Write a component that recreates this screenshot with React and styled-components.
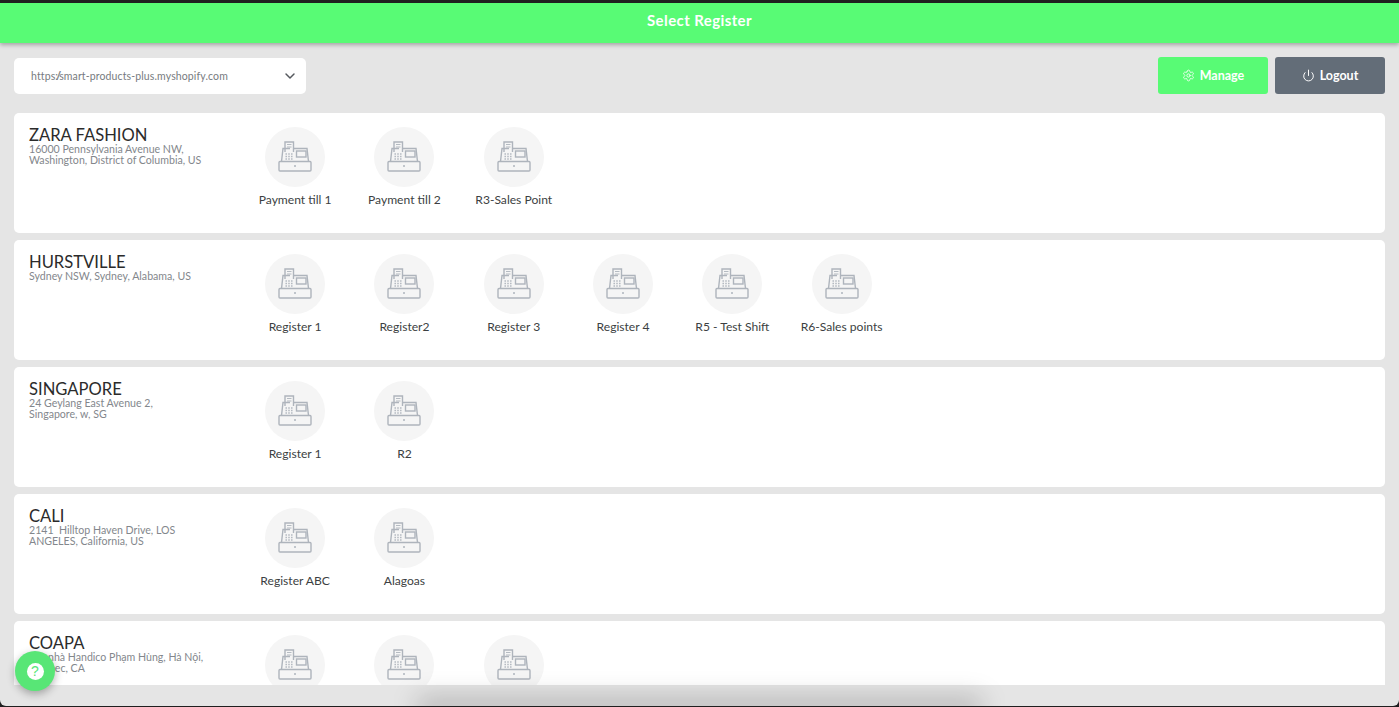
import React from 'react';
import styled, { createGlobalStyle } from 'styled-components';
import { Settings, Power, ChevronDown } from 'lucide-react';

const GlobalStyle = createGlobalStyle`
  html, body {
    margin: 0;
    height: 100%;
    background: #1f1f1f;
    overflow: hidden;
  }
  * { box-sizing: border-box; }
`;

const Page = styled.div`
  position: relative;
  height: 703px;
  margin-top: 3px;
  display: flex;
  flex-direction: column;
  overflow: hidden;
  background: #e5e5e5;
  border-radius: 0 0 6px 6px;
  font-family: Lato, "Liberation Sans", sans-serif;
`;

const Header = styled.header`
  flex: none;
  height: 40px;
  padding-bottom: 6px;
  display: flex;
  align-items: center;
  justify-content: center;
  background: #58fb75;
  color: #fff;
  font-size: 15px;
  font-weight: 700;
  letter-spacing: 0.4px;
  box-shadow: 0 2px 4px rgba(0, 0, 0, 0.28);
  position: relative;
  z-index: 1;
`;

const Toolbar = styled.div`
  flex: none;
  display: flex;
  justify-content: space-between;
  align-items: flex-start;
  padding: 14px 14px 0;
  height: 70px;
`;

const Select = styled.div`
  width: 292px;
  height: 36px;
  margin-top: 1px;
  display: flex;
  align-items: center;
  justify-content: space-between;
  padding: 0 8px 0 17px;
  background: #fff;
  border-radius: 5px;
  color: #777b80;
  font-size: 10.5px;
  letter-spacing: 0.12px;
`;

const Scheme = styled.span`
  letter-spacing: -2px;
`;

const Actions = styled.div`
  display: flex;
  gap: 7px;
`;

const ActionButton = styled.button`
  width: 110px;
  height: 37px;
  display: flex;
  align-items: center;
  justify-content: center;
  gap: 5px;
  border: none;
  border-radius: 3px;
  padding: 0;
  color: #fff;
  font-family: inherit;
  font-size: 12.5px;
  font-weight: 700;
  background: ${({ $dark }) => ($dark ? '#636d78' : '#58fb75')};
`;

const List = styled.div`
  flex: 1;
  min-height: 0;
  overflow: hidden;
  display: flex;
  flex-direction: column;
  gap: 7px;
  padding: 0 14px;
  margin-bottom: 21px;
`;

const Card = styled.section`
  flex: none;
  height: 120px;
  display: flex;
  background: #fff;
  border-radius: 5px;
`;

const Store = styled.div`
  flex: none;
  width: 226.5px;
  padding: 13px 0 0 15px;
`;

const StoreName = styled.h2`
  margin: 0;
  font-size: 16.6px;
  line-height: 18px;
  font-weight: 400;
  color: #2b2b2b;
`;

const Address = styled.p`
  margin: 0;
  font-size: 10.6px;
  line-height: 11px;
  white-space: pre-wrap;
  color: #83878c;
`;

const Registers = styled.div`
  display: flex;
  padding-top: 14px;
`;

const Register = styled.div`
  width: 109.3px;
  display: flex;
  flex-direction: column;
  align-items: center;
  gap: 6px;
`;

const IconCircle = styled.div`
  width: 60px;
  height: 60px;
  border-radius: 50%;
  display: flex;
  align-items: center;
  justify-content: center;
  background: #f5f5f5;
`;

const RegisterName = styled.span`
  font-size: 12.1px;
  line-height: 14px;
  white-space: nowrap;
  color: #3c3f42;
`;

const ScrollGlow = styled.div`
  position: absolute;
  left: 415px;
  right: 415px;
  bottom: -12px;
  height: 22px;
  border-radius: 11px;
  background: rgba(0, 0, 0, 0.19);
  filter: blur(12px);
`;

const HelpButton = styled.button`
  position: absolute;
  left: 15px;
  top: 648px;
  width: 40px;
  height: 40px;
  display: flex;
  align-items: center;
  justify-content: center;
  border: none;
  border-radius: 50%;
  padding: 0;
  background: #58e676;
  box-shadow: 0 3px 8px rgba(0, 0, 0, 0.3);
`;

const HelpMark = styled.span`
  width: 17px;
  height: 17px;
  border-radius: 50%;
  background: #fff;
  color: #58e676;
  font-size: 14px;
  font-weight: 400;
  line-height: 17px;
  text-align: center;
`;

const RegisterIcon = () => (
  <svg width="34" height="32" viewBox="0 0 34 32" fill="none" stroke="#aeb4bc" strokeWidth="1.4">
    <rect x="1" y="20.5" width="32" height="9.5" rx="1" />
    <path d="M3.5 20.5 5 7.5h7M15.5 7.5H29l1.5 13" />
    <path d="M7 11V1h8.5v10" />
    <path d="M9 3.5h4.5M9 6h4.5" strokeWidth="0.9" />
    <rect x="18.5" y="10" width="9.5" height="6" />
    <path d="M7.5 13h7M7.5 15.5h7M7.5 18h7" strokeWidth="1.4" strokeDasharray="1.4 1.4" />
    <path d="M16 25h2" strokeWidth="1.6" />
  </svg>
);

const stores = [
  { name: 'ZARA FASHION', address: '16000 Pennsylvania Avenue NW,\nWashington, District of Columbia, US', registers: ['Payment till 1', 'Payment till 2', 'R3-Sales Point'] },
  { name: 'HURSTVILLE', address: 'Sydney NSW, Sydney, Alabama, US', registers: ['Register 1', 'Register2', 'Register 3', 'Register 4', 'R5 - Test Shift', 'R6-Sales points'] },
  { name: 'SINGAPORE', address: '24 Geylang East Avenue 2,\nSingapore, w, SG', registers: ['Register 1', 'R2'] },
  { name: 'CALI', address: '2141  Hilltop Haven Drive, LOS\nANGELES, California, US', registers: ['Register ABC', 'Alagoas'] },
  { name: 'COAPA', address: 'Tòa nhà Handico Phạm Hùng, Hà Nội,\nQuebec, CA', registers: ['Register 1', 'Register 2', 'Register 3'] },
];

const App = () => (
  <>
    <GlobalStyle />
    <Page>
      <Header>Select Register</Header>
      <Toolbar>
        <Select>
          <span>
            https<Scheme>://</Scheme>smart-products-plus.myshopify.com
          </span>
          <ChevronDown size={16} color="#55595e" strokeWidth={2.2} />
        </Select>
        <Actions>
          <ActionButton>
            <Settings size={13} strokeWidth={1.5} />
            Manage
          </ActionButton>
          <ActionButton $dark>
            <Power size={13} strokeWidth={1.8} />
            Logout
          </ActionButton>
        </Actions>
      </Toolbar>
      <List>
        {stores.map((store) => (
          <Card key={store.name}>
            <Store>
              <StoreName>{store.name}</StoreName>
              <Address>{store.address}</Address>
            </Store>
            <Registers>
              {store.registers.map((reg) => (
                <Register key={reg}>
                  <IconCircle>
                    <RegisterIcon />
                  </IconCircle>
                  <RegisterName>{reg}</RegisterName>
                </Register>
              ))}
            </Registers>
          </Card>
        ))}
      </List>
      <ScrollGlow />
      <HelpButton>
        <HelpMark>?</HelpMark>
      </HelpButton>
    </Page>
  </>
);

export default App;
